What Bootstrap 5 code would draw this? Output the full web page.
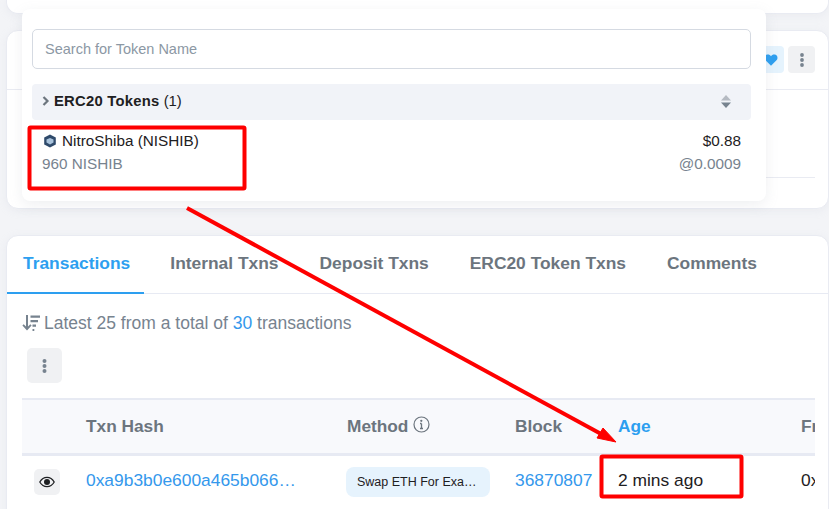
<!DOCTYPE html>
<html lang="en">

<head>
    <meta charset="UTF-8" />
    <meta name="viewport" content="width=device-width, initial-scale=1.0" />
    <title>Address Page</title>
    <link href="https://cdn.jsdelivr.net/npm/bootstrap@5.3.0/dist/css/bootstrap.min.css" rel="stylesheet" />
    <style>
        html, body { height: 509px; overflow: hidden; }
        body { background: #f3f4f7; font-family: "Liberation Sans", Arial, sans-serif; font-size: 15.3px; color: #1e2022; position: relative; }
        .page-wrap { padding-left: 6px; }
        .panel { background: #fff; border: 1px solid #e9ebf2; border-radius: 12px; box-shadow: 0 2px 8px rgba(189,197,209,.15); }
        .panel-top { height: 15px; margin-top: -1px; border-top: 0; border-radius: 0 0 12px 12px; }
        .panel-overview { height: 179px; margin-top: 16px; }
        .overview-head { height: 59px; border-bottom: 1px solid #e9ebf2; padding: 15px 13px 0 0; }
        .overview-rule { border-top: 1px solid #e9ebf2; margin: 87px 13px 0 20px; }
        .panel-txns { height: 290px; margin-top: 26px; border-radius: 12px 12px 0 0; }
        .act-btn { width: 27px; height: 27px; border-radius: 4px; background: #f0f1f3; }
        .act-btn.is-like { background: #e5f3fd; }
        .act-btn-lg { width: 35px; height: 35px; border-radius: 5px; margin: 15px 0 0 20px; }
        .act-btn-eye { width: 26px; height: 26px; border-radius: 5px; margin-left: 12px; }

        .token-menu { position: absolute; left: 22px; top: 9px; width: 744px; height: 192px; background: #fff; border-radius: 8px; padding: 20px 15px 0 10px; box-shadow: 0 4px 14px rgba(140,152,164,.14); }
        .token-search { height: 40px; border: 1px solid #d5dae2; border-radius: 5px; font-size: 14.5px; padding: 0 12px; color: #1e2022; }
        .token-search::placeholder { color: #8c98a4; }
        .token-group { height: 36px; margin-top: 15px; background: #f1f3f8; border-radius: 4px; padding: 0 20px 2px 10px; font-size: 14.8px; }
        .token-group b { letter-spacing: .25px; }
        .token-row { padding: 9px 10px 0 10px; line-height: 23px; }
        .token-glyph { margin-right: 5px; margin-left: 1px; }
        .text-quiet { color: #77838f; }

        .tab-strip { height: 58px; border-bottom: 1px solid #e7eaf3; }
        .tab-strip .nav-item + .nav-item { margin-left: 10px; }
        .tab-strip .nav-link { height: 58px; padding: 14px 15px 0 16px; margin: 0; font-size: 17.4px; font-weight: 700; color: #6c757e; border: 0; border-radius: 0; }
        .tab-strip .nav-link.active { padding-right: 14px; color: #2d9ff0; border-bottom: 2px solid #2d9ff0; }
        .txn-note { margin: 19px 0 0 15px; color: #77838f; font-size: 17.5px; line-height: 20px; }
        .txn-note a, .txn-link { color: #3498ec; text-decoration: none; }
        .txn-clip { width: 793px; margin: 15px 0 0 15px; overflow: hidden; }
        .txn-table { width: 793px; table-layout: fixed; margin: 0; white-space: nowrap; font-size: 17.4px; }
        .txn-table th { height: 55px; padding: 2px 0 0 12px; background: #f8f9fc; border-top: 2px solid #e7eaf3; border-bottom: 3px solid #e7eaf3; color: #6c757e; font-size: 17.3px; vertical-align: middle; overflow: hidden; }
        .txn-table th.is-sorted { color: #2d9ff0; }
        .txn-table td { height: 54px; padding: 0 0 4px 12px; border: 0; vertical-align: middle; color: #1e2022; overflow: hidden; }
        .hash-cut { display: block; overflow: hidden; text-overflow: ellipsis; width: 212px; }
        .method-tag { display: block; width: 144px; height: 30px; line-height: 30px; margin: 4px 0 0 -1px; padding: 0 11px; background: #e6f3fd; border-radius: 8px; font-size: 12.5px; overflow: hidden; text-overflow: ellipsis; }
        .markup-layer { position: absolute; left: 0; top: 0; pointer-events: none; }
    </style>
</head>

<body>
    <div class="page-wrap">
        <div class="panel panel-top"></div>

        <div class="panel panel-overview">
            <div class="overview-head d-flex justify-content-end gap-1">
                <div class="act-btn is-like d-flex align-items-center justify-content-center">
                    <svg width="14" height="14" viewBox="0 0 24 24" fill="#2d9ff0"><path d="M12 22 2.600 12.600C-.2 9.700.6 4.800 4 3.200 7 1.800 10.200 2.800 12 5.400 13.800 2.800 17 1.800 20 3.200c3.400 1.600 4.200 6.500 1.400 9.400z" /></svg>
                </div>
                <div class="act-btn d-flex align-items-center justify-content-center">
                    <svg width="4" height="14" viewBox="0 0 4 14" fill="#77838f"><circle cx="2" cy="2" r="1.900" /><circle cx="2" cy="7" r="1.900" /><circle cx="2" cy="12" r="1.900" /></svg>
                </div>
            </div>
            <div class="overview-rule"></div>
        </div>

        <div class="panel panel-txns">
            <ul class="nav tab-strip">
                <li class="nav-item"><a class="nav-link active" href="#">Transactions</a></li>
                <li class="nav-item"><a class="nav-link" href="#">Internal Txns</a></li>
                <li class="nav-item"><a class="nav-link" href="#">Deposit Txns</a></li>
                <li class="nav-item"><a class="nav-link" href="#">ERC20 Token Txns</a></li>
                <li class="nav-item"><a class="nav-link" href="#">Comments</a></li>
            </ul>

            <div class="txn-note d-flex align-items-center gap-1">
                <svg width="18" height="18" viewBox="0 0 18 18" fill="#77838f"><path d="M4 1h2v11.500l2.300-2.300 1.300 1.300L5 16.500.4 11.500l1.300-1.300L4 12.500z" /><path d="M8.500 1.500H18v2.300H8.500zM8.500 6H16v2.300H8.500zM10.500 10.500H14v2.300h-3.500zM10.500 15h1.800v2h-1.800z" /></svg>
                <span>Latest 25 from a total of <a href="#">30</a> transactions</span>
            </div>

            <div class="act-btn act-btn-lg d-flex align-items-center justify-content-center">
                <svg width="5" height="14" viewBox="0 0 5 14" fill="#77838f"><circle cx="2.500" cy="2" r="2" /><circle cx="2.500" cy="7" r="2" /><circle cx="2.500" cy="12" r="2" /></svg>
            </div>

            <div class="txn-clip">
                <table class="table txn-table">
                    <colgroup>
                        <col style="width: 52px" />
                        <col style="width: 261px" />
                        <col style="width: 168px" />
                        <col style="width: 103px" />
                        <col style="width: 183px" />
                        <col style="width: 100px" />
                    </colgroup>
                    <thead>
                        <tr>
                            <th></th>
                            <th>Txn Hash</th>
                            <th>
                                Method
                                <svg width="17" height="17" viewBox="0 0 17 17" fill="none" stroke="#6c757e" class="align-text-top"><circle cx="8.500" cy="8.500" r="7.500" stroke-width="1.200" /><path d="M8.500 7.500v5M7 12.500h3M7 7.500h1.500" stroke-width="1.300" /><circle cx="8.300" cy="4.800" r=".6" stroke-width="1.100" /></svg>
                            </th>
                            <th>Block</th>
                            <th class="is-sorted">Age</th>
                            <th>From</th>
                        </tr>
                    </thead>
                    <tbody>
                        <tr>
                            <td class="p-0">
                                <div class="act-btn act-btn-eye d-flex align-items-center justify-content-center">
                                    <svg width="16" height="12" viewBox="0 0 16 12"><path d="M.8 6C2.500 3 5 1.300 8 1.300S13.500 3 15.200 6C13.500 9 11 10.700 8 10.700S2.500 9 .8 6z" fill="none" stroke="#1e2022" stroke-width="1.300" /><circle cx="8" cy="6" r="3" fill="#1e2022" /></svg>
                                </div>
                            </td>
                            <td><a class="txn-link hash-cut" href="#">0xa9b3b0e600a465b0660f2c1d8e47</a></td>
                            <td><span class="method-tag">Swap ETH For Exact Tokens</span></td>
                            <td><a class="txn-link" href="#">36870807</a></td>
                            <td>2 mins ago</td>
                            <td>0x7f3a91c2</td>
                        </tr>
                    </tbody>
                </table>
            </div>
        </div>
    </div>

    <div class="token-menu">
        <input type="text" class="form-control token-search" placeholder="Search for Token Name" />
        <div class="token-group d-flex align-items-center justify-content-between">
            <span class="d-flex align-items-center gap-1">
                <svg width="8" height="10" viewBox="0 0 8 10" fill="none" stroke="#6c757e" stroke-width="2.200"><path d="M1.500 1l4 4-4 4" /></svg>
                <span><b>ERC20 Tokens</b> (1)</span>
            </span>
            <svg width="10" height="13" viewBox="0 0 10 13"><path d="M5 0l5 5.500H0z" fill="#b5bac2" /><path d="M5 13l5-5.500H0z" fill="#77838f" /></svg>
        </div>
        <div class="token-row d-flex justify-content-between">
            <div>
                <div class="d-flex align-items-center">
                    <svg width="14" height="14" viewBox="0 0 14 14" class="token-glyph"><path d="M7 .5l5.800 3v7L7 13.500l-5.800-3v-7z" fill="#2f4a6b" /><path d="M3.500 5.500L7 4l3.500 1.500v3L7 10.500 3.500 8.500z" fill="#a9c3dc" /></svg>
                    <span>NitroShiba (NISHIB)</span>
                </div>
                <div class="text-quiet">960 NISHIB</div>
            </div>
            <div class="text-end">
                <div>$0.88</div>
                <div class="text-quiet">@0.0009</div>
            </div>
        </div>
    </div>

    <!-- red annotation marks on top of the screenshot -->
    <svg class="markup-layer" width="829" height="509" viewBox="0 0 829 509">
        <rect x="29.500" y="127.500" width="215" height="61" rx="1" fill="none" stroke="#fe0000" stroke-width="4" />
        <rect x="601.500" y="456.500" width="140" height="40" rx="1" fill="none" stroke="#fe0000" stroke-width="4" />
        <path d="M187 208L603 435" stroke="#fe0000" stroke-width="4" fill="none" />
        <path d="M616 442L597 438 603 428z" fill="#fe0000" stroke="#fe0000" />
    </svg>

    <script src="https://cdn.jsdelivr.net/npm/bootstrap@5.3.0/dist/js/bootstrap.bundle.min.js"></script>
</body>

</html>
